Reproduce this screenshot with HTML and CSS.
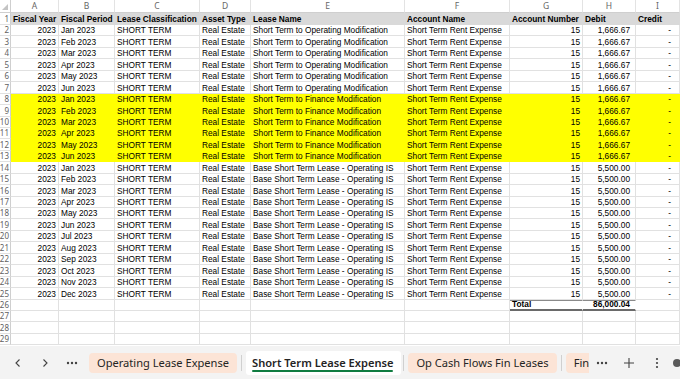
FILE: index.html
```html
<!DOCTYPE html>
<html>
<head>
<meta charset="utf-8">
<link rel="stylesheet" href="styles.css">
</head>
<body>
<div class="sheet">
  <div class="cols"><span class="corner"><svg width="8" height="8" viewBox="0 0 8 8"><path d="M7 1 L7 7 L1 7 Z" fill="#c4c4c4"/></svg></span><span>A</span><span>B</span><span>C</span><span>D</span><span>E</span><span>F</span><span>G</span><span>H</span><span>I</span></div>
  <div class="r h"><span class="rn">1</span><span>Fiscal Year</span><span>Fiscal Period</span><span>Lease Classification</span><span>Asset Type</span><span>Lease Name</span><span>Account Name</span><span>Account Number</span><span>Debit</span><span>Credit</span></div>
  <div class="r"><span class="rn">2</span><span class="n">2023</span><span>Jan 2023</span><span>SHORT TERM</span><span>Real Estate</span><span>Short Term to Operating Modification</span><span>Short Term Rent Expense</span><span class="n">15</span><span class="n d">1,666.67</span><span class="n c">-</span></div>
  <div class="r"><span class="rn">3</span><span class="n">2023</span><span>Feb 2023</span><span>SHORT TERM</span><span>Real Estate</span><span>Short Term to Operating Modification</span><span>Short Term Rent Expense</span><span class="n">15</span><span class="n d">1,666.67</span><span class="n c">-</span></div>
  <div class="r"><span class="rn">4</span><span class="n">2023</span><span>Mar 2023</span><span>SHORT TERM</span><span>Real Estate</span><span>Short Term to Operating Modification</span><span>Short Term Rent Expense</span><span class="n">15</span><span class="n d">1,666.67</span><span class="n c">-</span></div>
  <div class="r"><span class="rn">5</span><span class="n">2023</span><span>Apr 2023</span><span>SHORT TERM</span><span>Real Estate</span><span>Short Term to Operating Modification</span><span>Short Term Rent Expense</span><span class="n">15</span><span class="n d">1,666.67</span><span class="n c">-</span></div>
  <div class="r"><span class="rn">6</span><span class="n">2023</span><span>May 2023</span><span>SHORT TERM</span><span>Real Estate</span><span>Short Term to Operating Modification</span><span>Short Term Rent Expense</span><span class="n">15</span><span class="n d">1,666.67</span><span class="n c">-</span></div>
  <div class="r"><span class="rn">7</span><span class="n">2023</span><span>Jun 2023</span><span>SHORT TERM</span><span>Real Estate</span><span>Short Term to Operating Modification</span><span>Short Term Rent Expense</span><span class="n">15</span><span class="n d">1,666.67</span><span class="n c">-</span></div>
  <div class="r y"><span class="rn">8</span><span class="n">2023</span><span>Jan 2023</span><span>SHORT TERM</span><span>Real Estate</span><span>Short Term to Finance Modification</span><span>Short Term Rent Expense</span><span class="n">15</span><span class="n d">1,666.67</span><span class="n c">-</span></div>
  <div class="r y"><span class="rn">9</span><span class="n">2023</span><span>Feb 2023</span><span>SHORT TERM</span><span>Real Estate</span><span>Short Term to Finance Modification</span><span>Short Term Rent Expense</span><span class="n">15</span><span class="n d">1,666.67</span><span class="n c">-</span></div>
  <div class="r y"><span class="rn">10</span><span class="n">2023</span><span>Mar 2023</span><span>SHORT TERM</span><span>Real Estate</span><span>Short Term to Finance Modification</span><span>Short Term Rent Expense</span><span class="n">15</span><span class="n d">1,666.67</span><span class="n c">-</span></div>
  <div class="r y"><span class="rn">11</span><span class="n">2023</span><span>Apr 2023</span><span>SHORT TERM</span><span>Real Estate</span><span>Short Term to Finance Modification</span><span>Short Term Rent Expense</span><span class="n">15</span><span class="n d">1,666.67</span><span class="n c">-</span></div>
  <div class="r y"><span class="rn">12</span><span class="n">2023</span><span>May 2023</span><span>SHORT TERM</span><span>Real Estate</span><span>Short Term to Finance Modification</span><span>Short Term Rent Expense</span><span class="n">15</span><span class="n d">1,666.67</span><span class="n c">-</span></div>
  <div class="r y"><span class="rn">13</span><span class="n">2023</span><span>Jun 2023</span><span>SHORT TERM</span><span>Real Estate</span><span>Short Term to Finance Modification</span><span>Short Term Rent Expense</span><span class="n">15</span><span class="n d">1,666.67</span><span class="n c">-</span></div>
  <div class="r"><span class="rn">14</span><span class="n">2023</span><span>Jan 2023</span><span>SHORT TERM</span><span>Real Estate</span><span>Base Short Term Lease - Operating IS</span><span>Short Term Rent Expense</span><span class="n">15</span><span class="n d">5,500.00</span><span class="n c">-</span></div>
  <div class="r"><span class="rn">15</span><span class="n">2023</span><span>Feb 2023</span><span>SHORT TERM</span><span>Real Estate</span><span>Base Short Term Lease - Operating IS</span><span>Short Term Rent Expense</span><span class="n">15</span><span class="n d">5,500.00</span><span class="n c">-</span></div>
  <div class="r"><span class="rn">16</span><span class="n">2023</span><span>Mar 2023</span><span>SHORT TERM</span><span>Real Estate</span><span>Base Short Term Lease - Operating IS</span><span>Short Term Rent Expense</span><span class="n">15</span><span class="n d">5,500.00</span><span class="n c">-</span></div>
  <div class="r"><span class="rn">17</span><span class="n">2023</span><span>Apr 2023</span><span>SHORT TERM</span><span>Real Estate</span><span>Base Short Term Lease - Operating IS</span><span>Short Term Rent Expense</span><span class="n">15</span><span class="n d">5,500.00</span><span class="n c">-</span></div>
  <div class="r"><span class="rn">18</span><span class="n">2023</span><span>May 2023</span><span>SHORT TERM</span><span>Real Estate</span><span>Base Short Term Lease - Operating IS</span><span>Short Term Rent Expense</span><span class="n">15</span><span class="n d">5,500.00</span><span class="n c">-</span></div>
  <div class="r"><span class="rn">19</span><span class="n">2023</span><span>Jun 2023</span><span>SHORT TERM</span><span>Real Estate</span><span>Base Short Term Lease - Operating IS</span><span>Short Term Rent Expense</span><span class="n">15</span><span class="n d">5,500.00</span><span class="n c">-</span></div>
  <div class="r"><span class="rn">20</span><span class="n">2023</span><span>Jul 2023</span><span>SHORT TERM</span><span>Real Estate</span><span>Base Short Term Lease - Operating IS</span><span>Short Term Rent Expense</span><span class="n">15</span><span class="n d">5,500.00</span><span class="n c">-</span></div>
  <div class="r"><span class="rn">21</span><span class="n">2023</span><span>Aug 2023</span><span>SHORT TERM</span><span>Real Estate</span><span>Base Short Term Lease - Operating IS</span><span>Short Term Rent Expense</span><span class="n">15</span><span class="n d">5,500.00</span><span class="n c">-</span></div>
  <div class="r"><span class="rn">22</span><span class="n">2023</span><span>Sep 2023</span><span>SHORT TERM</span><span>Real Estate</span><span>Base Short Term Lease - Operating IS</span><span>Short Term Rent Expense</span><span class="n">15</span><span class="n d">5,500.00</span><span class="n c">-</span></div>
  <div class="r"><span class="rn">23</span><span class="n">2023</span><span>Oct 2023</span><span>SHORT TERM</span><span>Real Estate</span><span>Base Short Term Lease - Operating IS</span><span>Short Term Rent Expense</span><span class="n">15</span><span class="n d">5,500.00</span><span class="n c">-</span></div>
  <div class="r"><span class="rn">24</span><span class="n">2023</span><span>Nov 2023</span><span>SHORT TERM</span><span>Real Estate</span><span>Base Short Term Lease - Operating IS</span><span>Short Term Rent Expense</span><span class="n">15</span><span class="n d">5,500.00</span><span class="n c">-</span></div>
  <div class="r"><span class="rn">25</span><span class="n">2023</span><span>Dec 2023</span><span>SHORT TERM</span><span>Real Estate</span><span>Base Short Term Lease - Operating IS</span><span>Short Term Rent Expense</span><span class="n">15</span><span class="n d">5,500.00</span><span class="n c">-</span></div>
  <div class="r"><span class="rn">26</span><span></span><span></span><span></span><span></span><span></span><span></span><span class="tot">Total</span><span class="tot n d">86,000.04</span><span></span></div>
  <div class="r"><span class="rn">27</span><span></span><span></span><span></span><span></span><span></span><span></span><span></span><span></span><span></span></div>
  <div class="r"><span class="rn">28</span><span></span><span></span><span></span><span></span><span></span><span></span><span></span><span></span><span></span></div>
  <div class="r"><span class="rn">29</span><span></span><span></span><span></span><span></span><span></span><span></span><span></span><span></span><span></span></div>
</div>
<div class="tabbar">
  <div class="nav">
    <span class="btn"><svg width="10" height="10" viewBox="0 0 10 10"><path d="M6.5 1.5 L3 5 L6.5 8.5" fill="none" stroke="#424242" stroke-width="1.1"/></svg></span>
    <span class="btn"><svg width="10" height="10" viewBox="0 0 10 10"><path d="M3.5 1.5 L7 5 L3.5 8.5" fill="none" stroke="#424242" stroke-width="1.1"/></svg></span>
    <span class="btn"><svg width="12" height="4" viewBox="0 0 12 4"><circle cx="2" cy="2" r="1.2" fill="#424242"/><circle cx="6" cy="2" r="1.2" fill="#424242"/><circle cx="10" cy="2" r="1.2" fill="#424242"/></svg></span>
  </div>
  <div class="tabs">
    <div class="tab">Operating Lease Expense</div>
    <i class="sep"></i>
    <div class="tab active">Short Term Lease Expense</div>
    <i class="sep sep2"></i>
    <div class="tab">Op Cash Flows Fin Leases</div>
    <i class="sep"></i>
    <div class="tab last">Finance Lease Expense</div>
  </div>
  <div class="tools">
    <span class="btn b1"><svg width="12" height="4" viewBox="0 0 12 4"><circle cx="2" cy="2" r="1.2" fill="#424242"/><circle cx="6" cy="2" r="1.2" fill="#424242"/><circle cx="10" cy="2" r="1.2" fill="#424242"/></svg></span>
    <span class="btn"><svg width="12" height="12" viewBox="0 0 12 12"><path d="M6 1 V11 M1 6 H11" stroke="#424242" stroke-width="1.1"/></svg></span>
    <span class="btn"><svg width="4" height="12" viewBox="0 0 4 12"><circle cx="2" cy="2" r="1.1" fill="#424242"/><circle cx="2" cy="6" r="1.1" fill="#424242"/><circle cx="2" cy="10" r="1.1" fill="#424242"/></svg></span>
    <span class="edge"><svg width="10" height="10" viewBox="0 0 10 10"><circle cx="5" cy="5" r="4" fill="#5a5a5a"/></svg></span>
  </div>
</div>
</body>
</html>
```
FILE: styles.css
```css
* { box-sizing: border-box; margin: 0; padding: 0; }
html, body { width: 680px; height: 379px; overflow: hidden; background: #fff; }
body { font-family: "Liberation Sans", Arial, sans-serif; color: #000; }

.sheet { height: 346px; overflow: hidden; }

.cols, .r {
  display: grid;
  grid-template-columns: 11px 48px 56px 85px 51px 154px 105px 73px 53px 44px;
}

.cols { height: 13px; }
.cols span {
  font-family: "Noto Sans", "Liberation Sans", sans-serif;
  font-size: 8.5px;
  line-height: 12px;
  color: #666;
  text-align: center;
  border-right: 1px solid #e3e3e3;
  border-bottom: 1px solid #cfcfcf;
}
.cols .corner { border-right-color: #cfcfcf; display: flex; align-items: flex-end; justify-content: flex-end; padding: 0 1px 1px 0; }

.r { height: 11.45px; }
.r span {
  display: flex;
  align-items: flex-end;
  font-size: 8.3px;
  line-height: 10px;
  padding: 0 2px;
  white-space: nowrap;
  overflow: hidden;
  border-right: 1px solid #e1e1e1;
  border-bottom: 1px solid #e1e1e1;
}
.r .n { justify-content: flex-end; }
.r .d { padding-right: 5px; }
.r .c { padding-right: 8px; }
.r .rn {
  justify-content: flex-end;
  padding: 0 1px 0 0;
  font-family: "Noto Sans", "Liberation Sans", sans-serif;
  font-size: 8px;
  color: #616161;
  border-right-color: #cfcfcf;
}

.r.h { height: 12px; }
.r.h span { font-weight: bold; background: #d9d9d9; border-color: #d9d9d9; }
.r.h .rn { font-weight: normal; background: #fff; border-right-color: #cfcfcf; border-bottom-color: #e1e1e1; }

.r.y span:not(.rn) { background: #ffff00; border-color: #ffff00; }

.r .tot {
  font-weight: bold;
  border-top: 1px solid #8a8a8a;
  border-bottom: 2px solid #6a6a6a;
  border-right-color: transparent;
}

.tabbar {
  height: 33px;
  background: #f3f3f3;
  display: flex;
  align-items: center;
  font-family: "Noto Sans", "Open Sans", sans-serif;
  font-size: 11.1px;
  color: #242424;
}
.btn { display: flex; align-items: center; justify-content: center; width: 27px; height: 24px; flex-shrink: 0; }
.nav { display: flex; padding-left: 4px; width: 89px; flex-shrink: 0; }

.tabs {
  display: flex;
  align-items: center;
  width: 500px;
  overflow: hidden;
  flex-shrink: 0;
}
.tab {
  flex-shrink: 0;
  height: 20px;
  line-height: 20px;
  padding: 0 8px;
  border-radius: 4px;
  background: #fce4d6;
  white-space: nowrap;
}
.tab.active {
  position: relative;
  height: 24px;
  line-height: 23px;
  background: #fff;
  border-radius: 3px;
  padding: 0 8px 0 6px;
  font-weight: 600;
}
.tab.active::after {
  content: "";
  position: absolute;
  left: 6px;
  right: 8px;
  bottom: 3px;
  height: 2px;
  border-radius: 1px;
  background: #107c41;
}
.sep { display: block; width: 1px; height: 16px; background: #d0d0d0; margin: 0 4px; flex-shrink: 0; }
.sep2 { margin-left: 2px; }

.tools { display: flex; align-items: center; }
.tools .btn { width: 28px; }
.tools .b1 { width: 26px; }
.edge { display: flex; align-items: center; margin-left: 1px; }
```
